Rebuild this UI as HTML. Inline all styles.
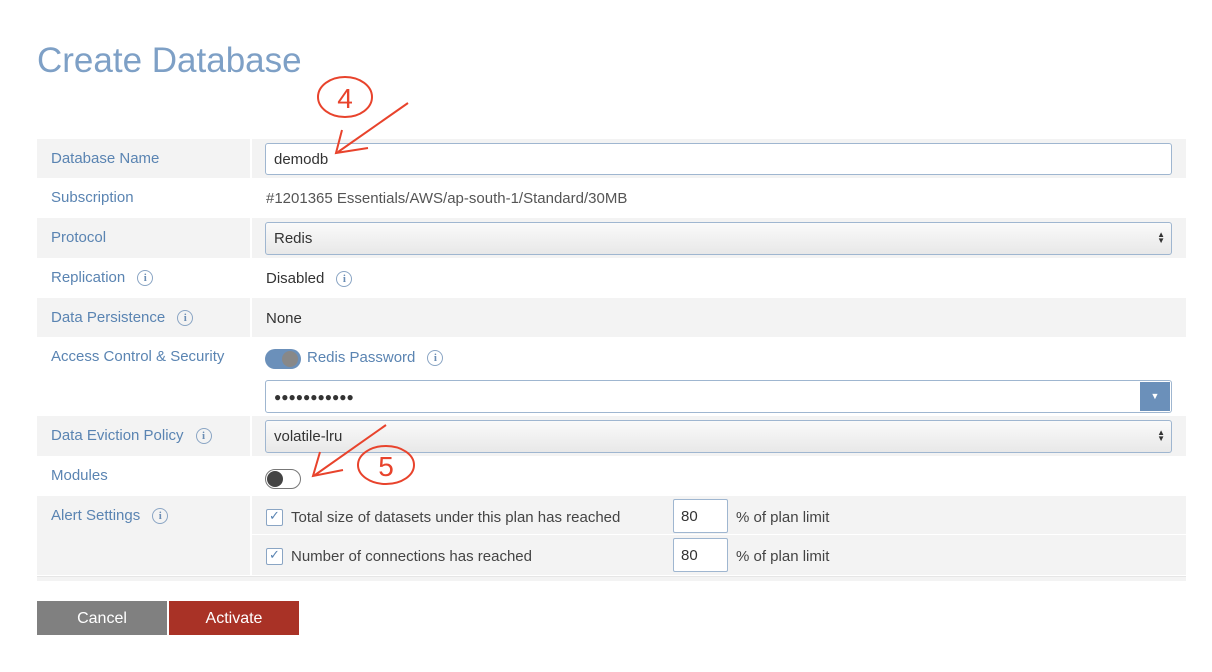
<!DOCTYPE html>
<html><head><style>
body{margin:0;width:1212px;height:672px;background:#fff;font-family:"Liberation Sans",sans-serif;position:relative;overflow:hidden}
.a{position:absolute}
.row{position:absolute;left:37px;width:1149px}
.g .l,.g .r{background:#f3f3f3}
.l{position:absolute;left:0;width:213px;top:0;bottom:0}
.r{position:absolute;left:215px;right:0;top:0;bottom:0}
.lab{position:absolute;left:14px;top:11px;color:#5a84b2;font-size:15px}
.val{position:absolute;left:229px;top:12px;color:#333;font-size:15px}
.info{display:inline-block;width:14px;height:14px;border:1px solid #8aa5c4;border-radius:50%;font-size:11px;line-height:14px;text-align:center;color:#6b8db4;font-family:"Liberation Serif",serif;font-weight:bold;margin-left:12px;vertical-align:1px}
.inp{position:absolute;left:265px;width:907px;height:31px;border:1px solid #9fb6d0;border-radius:3px;background:#fff;box-sizing:border-box;font-size:15px;color:#333;padding:7px 8px}
.sel{background:linear-gradient(#fafafa,#e8e8e8)}
.arr{position:absolute;right:6px;top:9px;font-size:8px;line-height:6px;color:#333}
.cb{position:absolute;left:266px;width:15px;height:15px;border:1px solid #8aa5c4;border-radius:2px;background:#fff}
.num{position:absolute;left:673px;width:55px;height:34px;border:1px solid #9fb6d0;border-radius:2px;background:#fff;box-sizing:border-box;font-size:15px;color:#333;padding:8px 7px}
</style></head><body>
<div class="a" style="left:37px;top:41px;font-size:35px;color:#7ea0c6">Create Database</div>

<div class="row g" style="top:139px;height:39px"><div class="l"><div class="lab">Database Name</div></div><div class="r"></div></div>
<div class="row" style="top:178px;height:40px"><div class="lab">Subscription</div><div class="val" style="color:#555">#1201365 Essentials/AWS/ap-south-1/Standard/30MB</div></div>
<div class="row g" style="top:218px;height:40px"><div class="l"><div class="lab">Protocol</div></div><div class="r"></div></div>
<div class="row" style="top:258px;height:40px"><div class="lab">Replication<span class="info">i</span></div><div class="val">Disabled<span class="info">i</span></div></div>
<div class="row g" style="top:298px;height:39px"><div class="l"><div class="lab">Data Persistence<span class="info">i</span></div></div><div class="r"><div class="val" style="left:14px">None</div></div></div>
<div class="row" style="top:337px;height:79px"><div class="lab">Access Control &amp; Security</div></div>
<div class="row g" style="top:416px;height:40px"><div class="l"><div class="lab">Data Eviction Policy<span class="info">i</span></div></div><div class="r"></div></div>
<div class="row" style="top:456px;height:40px"><div class="lab">Modules</div></div>
<div class="row g" style="top:496px;height:79px"><div class="l"><div class="lab">Alert Settings<span class="info">i</span></div></div><div class="r"><div class="a" style="left:0;right:0;top:38px;height:1px;background:#fff"></div></div></div>
<div class="a" style="left:37px;top:576px;width:1149px;height:4px;background:#f3f3f3;border-top:1px solid #e6e6e6"></div>

<div class="inp" style="top:143px;height:32px">demodb</div>
<div class="inp sel" style="top:222px;height:33px">Redis<div class="arr">▲<br>▼</div></div>
<div class="a" style="left:265px;top:349px;width:36px;height:20px;border-radius:10px;background:#6b90ba"><div class="a" style="left:17px;top:2px;width:16px;height:16px;border-radius:50%;background:#888"></div></div>
<div class="a" style="left:307px;top:349px;font-size:15px;color:#5a84b2">Redis Password<span class="info">i</span></div>
<div class="inp" style="top:380px;height:33px;font-size:12px;letter-spacing:0px;padding-top:9px">●●●●●●●●●●●<div class="a" style="right:1px;top:1px;width:30px;height:29px;background:#6b90ba;color:#fff;font-size:9px;text-align:center;line-height:29px">▼</div></div>
<div class="inp sel" style="top:420px;height:33px">volatile-lru<div class="arr">▲<br>▼</div></div>
<div class="a" style="left:265px;top:469px;width:34px;height:18px;border-radius:10px;border:1px solid #777;background:#fff"><div class="a" style="left:1px;top:1px;width:16px;height:16px;border-radius:50%;background:#444"></div></div>

<div class="cb" style="top:509px"><span class="a" style="left:2px;top:-2px;font-size:13px;color:#5a84b2">✓</span></div>
<div class="a" style="left:291px;top:509px;font-size:15px;color:#444">Total size of datasets under this plan has reached</div>
<div class="num" style="top:499px">80</div>
<div class="a" style="left:736px;top:509px;font-size:15px;color:#444">% of plan limit</div>
<div class="cb" style="top:548px"><span class="a" style="left:2px;top:-2px;font-size:13px;color:#5a84b2">✓</span></div>
<div class="a" style="left:291px;top:548px;font-size:15px;color:#444">Number of connections has reached</div>
<div class="num" style="top:538px">80</div>
<div class="a" style="left:736px;top:548px;font-size:15px;color:#444">% of plan limit</div>

<div class="a" style="left:37px;top:601px;width:130px;height:34px;background:#808080;color:#fff;font-size:16px;text-align:center;line-height:35px">Cancel</div>
<div class="a" style="left:169px;top:601px;width:130px;height:34px;background:#a93226;color:#fff;font-size:16px;text-align:center;line-height:35px">Activate</div>

<svg class="a" style="left:0;top:0" width="1212" height="672">
<g fill="none" stroke="#e8432c" stroke-width="2">
<ellipse cx="345" cy="97" rx="27" ry="20"/>
<path d="M408 103 L338 152 M342 130 L336 153 L368 148"/>
<ellipse cx="386" cy="465" rx="28" ry="19"/>
<path d="M386 425 L315 475 M320 452 L313 476 L343 470"/>
</g>
<text x="345" y="108" font-size="28" fill="#e8432c" text-anchor="middle" font-family="Liberation Sans">4</text>
<text x="386" y="476" font-size="28" fill="#e8432c" text-anchor="middle" font-family="Liberation Sans">5</text>
</svg>
</body></html>
